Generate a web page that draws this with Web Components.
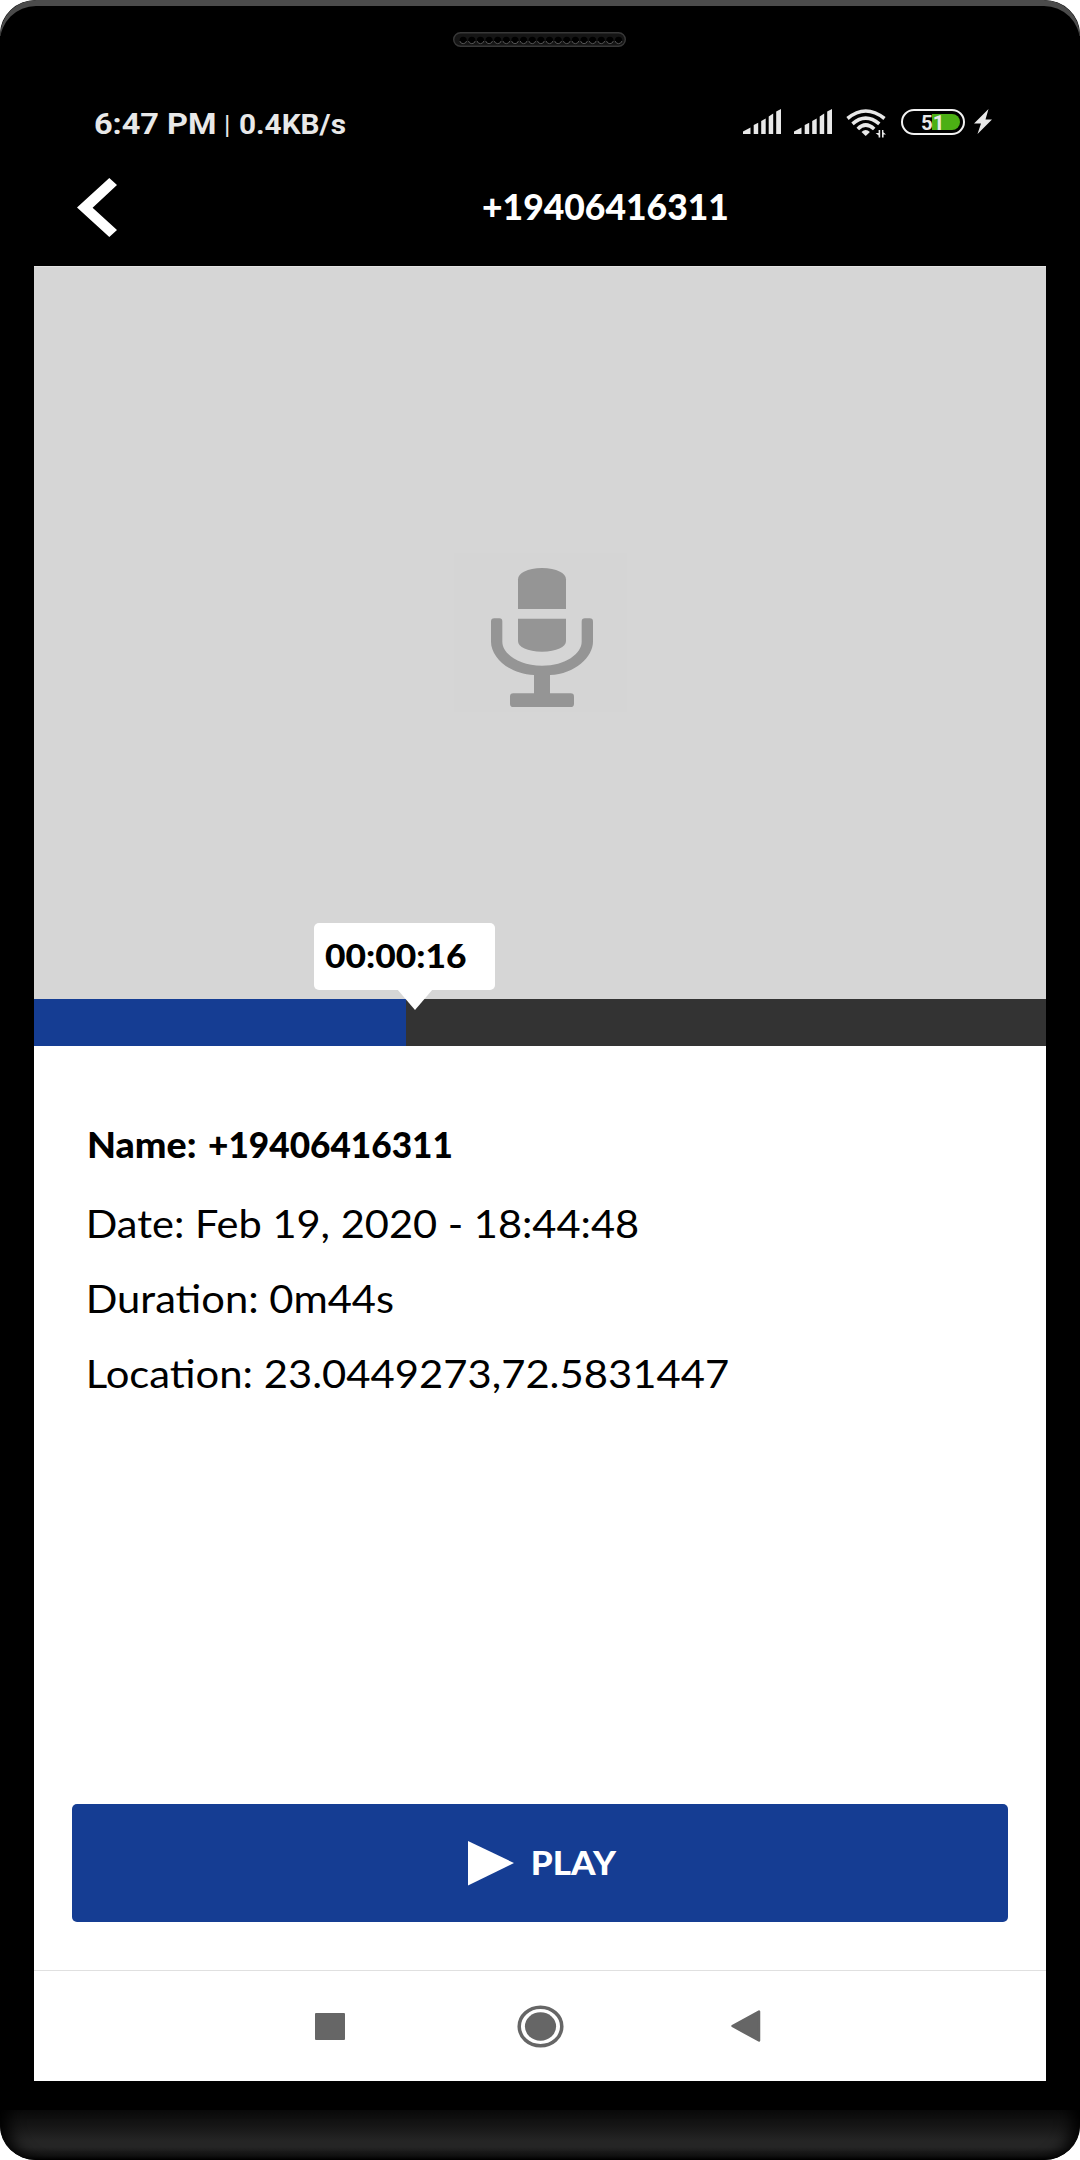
<!DOCTYPE html>
<html lang="en">
<head>
    <meta charset="UTF-8">
    <title>Recording</title>
    <style>
        body {
            margin: 0;
            background: #fff;
        }
    </style>
</head>
<body>
    <phone-frame>
        <status-bar slot="top" time="6:47 PM" speed="0.4KB/s" battery="51"></status-bar>
        <title-bar slot="top" heading="+19406416311"></title-bar>
        <record-preview></record-preview>
        <record-progress time="00:00:16"></record-progress>
        <record-details>
            <fit-text class="name" width="106">Name:</fit-text>
            <fit-text class="name" width="242" slot="name">+19406416311</fit-text>
            <fit-text width="549" slot="rows">Date: Feb 19, 2020 - 18:44:48</fit-text>
            <fit-text width="303.5" slot="rows">Duration: 0m44s</fit-text>
            <fit-text width="639" slot="rows">Location: 23.0449273,72.5831447</fit-text>
        </record-details>
        <play-button>PLAY</play-button>
        <nav-bar></nav-bar>
    </phone-frame>

    <script>
        // Text stretched so that its ink is exactly `width` pixels wide
        class FitText extends HTMLElement {
            constructor() {
                super();
                this.attachShadow({ mode: 'open' });
                this.shadowRoot.innerHTML = `
                    <style>
                        :host {
                            display: block;
                            white-space: nowrap;
                            flex: none;
                        }
                        span {
                            display: inline-block;
                            transform-origin: 0 50%;
                        }
                    </style>
                    <span><slot></slot></span>
                `;
            }

            connectedCallback() {
                const width = parseFloat(this.getAttribute('width'));
                const style = getComputedStyle(this);
                const ctx = document.createElement('canvas').getContext('2d');
                ctx.font = `${style.fontWeight} ${style.fontSize} ${style.fontFamily}`;
                const box = ctx.measureText(this.textContent);
                const scale = width / (box.actualBoundingBoxRight + box.actualBoundingBoxLeft);
                const span = this.shadowRoot.querySelector('span');
                span.style.transform = `translateX(${box.actualBoundingBoxLeft * scale}px) scaleX(${scale})`;
                this.style.width = width + 'px';
            }
        }

        class PhoneFrame extends HTMLElement {
            constructor() {
                super();
                this.attachShadow({ mode: 'open' });
                let holes = '';
                for (let i = 0; i < 19; i++) {
                    const x = 10.2 + i * 8.63;
                    holes += `<circle cx="${x}" cy="8.3" r="3.6" fill="#000"/>
                        <path d="M${x - 3.4} 9a3.5 3.5 0 0 0 6.8 0" fill="none" stroke="#555" stroke-width="1"/>`;
                }
                this.shadowRoot.innerHTML = `
                    <style>
                        :host {
                            display: flex;
                            flex-direction: column;
                            box-sizing: border-box;
                            width: 1080px;
                            height: 2160px;
                            overflow: hidden;
                            border-radius: 36px / 34px;
                            background: #000;
                            font-family: Lato, "Open Sans", sans-serif;
                        }
                        .rim {
                            height: 36px;
                            margin-bottom: -4px;
                            border-radius: 36px 36px 0 0;
                            box-shadow: inset 0 6px 0 #4b4b4b;
                            flex: none;
                        }
                        .grille {
                            display: block;
                            width: 173px;
                            height: 15px;
                            margin: 0 auto 53px 453px;
                            flex: none;
                        }
                        .screen {
                            display: flex;
                            flex-direction: column;
                            width: 1012px;
                            height: 1815px;
                            margin: 0 34px;
                            background: #fff;
                            flex: none;
                        }
                        .chin {
                            height: 50px;
                            margin-top: auto;
                            background: linear-gradient(#0b0b0b, #151515 30%, #252525 62%, #252525 74%, #121212 92%, #000);
                            box-shadow: inset 18px 0 16px -10px #000, inset -18px 0 16px -10px #000;
                            border-radius: 0 0 36px 36px;
                            flex: none;
                        }
                    </style>
                    <div class="rim"></div>
                    <svg class="grille" viewBox="0 0 173 15">
                        <rect x=".7" y=".7" width="171.6" height="13.6" rx="6.8" fill="#151515" stroke="#383838" stroke-width="1.4"/>
                        ${holes}
                    </svg>
                    <slot name="top"></slot>
                    <div class="screen"><slot></slot></div>
                    <div class="chin"></div>
                `;
            }
        }

        class StatusBar extends HTMLElement {
            connectedCallback() {
                this.attachShadow({ mode: 'open' });
                const signal = `
                    <svg width="38" height="25" viewBox="0 0 38 25" fill="#e8e8e8">
                        <path d="M0 22.5 7.5 18.5V25H0zM10.7 16l4.5-2.2V25h-4.5zM18.2 12l4.5-2.5V25h-4.5zM25.7 7.5l4.5-3V25h-4.5zM33.2 2.4 38 0V25h-4.8z"/>
                    </svg>`;
                this.shadowRoot.innerHTML = `
                    <style>
                        :host {
                            display: flex;
                            align-items: center;
                            height: 46px;
                            padding: 0 88px 0 95px;
                            color: #e8e8e8;
                            font: 700 29px/40px Roboto, sans-serif;
                            flex: none;
                        }
                        .text {
                            display: flex;
                            align-items: baseline;
                            margin-right: auto;
                            padding-top: 2px;
                        }
                        .bar {
                            margin: 0 11px 0 11px;
                            font-weight: 400;
                            font-size: 26px;
                        }
                        .speed {
                            font-size: 27px;
                        }
                        .icons {
                            display: flex;
                            align-items: center;
                            padding-bottom: 3px;
                        }
                        .icons svg {
                            display: block;
                        }
                        .battery {
                            display: flex;
                            align-items: center;
                            justify-content: center;
                            box-sizing: border-box;
                            width: 64px;
                            height: 26px;
                            margin: 0 9px 0 15px;
                            border: 2.5px solid #f2f2f2;
                            border-radius: 13px;
                        }
                        .level {
                            display: flex;
                            align-items: center;
                            width: 54px;
                            height: 16px;
                            border-radius: 8px;
                            background: linear-gradient(90deg, transparent 26px, #4caf14 0);
                            font-size: 21px;
                            line-height: 18px;
                        }
                        .level fit-text {
                            margin: 2px 0 0 16px;
                        }
                    </style>
                    <div class="text">
                        <fit-text width="120">${this.getAttribute('time')}</fit-text>
                        <fit-text class="bar" width="3">|</fit-text>
                        <fit-text class="speed" width="105">${this.getAttribute('speed')}</fit-text>
                    </div>
                    <div class="icons">
                        ${signal}
                        <svg width="13" height="1"></svg>
                        ${signal}
                        <svg width="14" height="1"></svg>
                        <svg width="40" height="29" viewBox="0 0 40 29" style="margin-top: 4px">
                            <g fill="none" stroke="#e8e8e8" stroke-width="3.6">
                                <path d="M1.5 9.5Q19.5-5.5 38.5 9.5"/>
                                <path d="M6.5 14.8Q19.5 3.3 33.3 14.8"/>
                                <path d="M11.8 20Q19.5 12 28.2 20"/>
                            </g>
                            <path d="M19.7 27 15.5 23q4.2-4 8.4 0z" fill="#e8e8e8"/>
                            <path d="M34.2 21v7.5h-1.6v-2l-3-2.5h3v-3zM36 28.5V21h1.4v2.2l2.6 2.3h-2.4v3z" fill="#e8e8e8"/>
                        </svg>
                        <div class="battery"><div class="level"><fit-text width="19.5">${this.getAttribute('battery')}</fit-text></div></div>
                        <svg width="18" height="25" viewBox="0 0 18 25"><path d="M14.5 0 0 14.5h7L3.5 25 18 10.5h-6.500z" fill="#e8e8e8"/></svg>
                    </div>
                `;
            }
        }

        class TitleBar extends HTMLElement {
            connectedCallback() {
                this.attachShadow({ mode: 'open' });
                this.shadowRoot.innerHTML = `
                    <style>
                        :host {
                            display: flex;
                            align-items: center;
                            gap: 366px;
                            height: 120px;
                            padding-left: 77px;
                            color: #fff;
                            font-size: 36px;
                            font-weight: 900;
                            line-height: 48px;
                            flex: none;
                        }
                        svg {
                            margin-top: 2px;
                        }
                    </style>
                    <svg width="40" height="59" viewBox="0 0 40 59"><path d="M0 29.500 32.300 0 40 7 15.600 29.800 40 52 32.300 59z" fill="#fff"/></svg>
                    <fit-text width="244">${this.getAttribute('heading')}</fit-text>
                `;
            }
        }

        class RecordPreview extends HTMLElement {
            constructor() {
                super();
                this.attachShadow({ mode: 'open' });
                this.shadowRoot.innerHTML = `
                    <style>
                        :host {
                            display: flex;
                            align-items: center;
                            justify-content: center;
                            height: 733px;
                            background: #d6d6d6;
                            box-shadow: inset 0 1px 0 #e3e3e3;
                            flex: none;
                        }
                        svg {
                            background: #d5d5d5;
                        }
                    </style>
                    <svg width="173" height="159" viewBox="42 39 519 477" fill="#959595">
                        <path d="M234 207V118C234 100 262 84 306 84S378 100 378 118V207Z"/>
                        <path d="M234 236H378V303C378 321 350 335 306 335S234 321 234 303Z"/>
                        <path d="M153 245q0-10 10-10h15q9 0 9 10V305C187 340 235 377 306 377S425 340 425 305V245q0-10 10-10h14q10 0 10 10V305C459 350 405 402 330 405V460H392q10 0 10 10V491q0 10-10 10H220q-10 0-10-10V470q0-10 10-10H282V405C205 402 153 350 153 305Z"/>
                    </svg>
                `;
            }
        }

        class RecordProgress extends HTMLElement {
            connectedCallback() {
                this.attachShadow({ mode: 'open' });
                this.shadowRoot.innerHTML = `
                    <style>
                        :host {
                            display: block;
                            position: relative;
                            height: 47px;
                            background: #333;
                            flex: none;
                        }
                        .done {
                            width: 372px;
                            height: 100%;
                            background: #153d93;
                        }
                        .tip {
                            position: absolute;
                            left: 280px;
                            bottom: 56px;
                            box-sizing: border-box;
                            width: 181px;
                            height: 67px;
                            padding: 0 11px;
                            border-radius: 5px;
                            background: #fff;
                            color: #000;
                            font-size: 32px;
                            font-weight: 900;
                            line-height: 65px;
                        }
                        .tip::after {
                            content: '';
                            position: absolute;
                            left: 83px;
                            top: 66px;
                            border: 18px solid transparent;
                            border-top: 21px solid #fff;
                            border-bottom: 0;
                        }
                    </style>
                    <div class="done"></div>
                    <div class="tip"><fit-text width="141">${this.getAttribute('time')}</fit-text></div>
                `;
            }
        }

        class RecordDetails extends HTMLElement {
            constructor() {
                super();
                this.attachShadow({ mode: 'open' });
                this.shadowRoot.innerHTML = `
                    <style>
                        :host {
                            display: flex;
                            flex-direction: column;
                            padding: 61px 54px 0 55px;
                            color: #000;
                            font-size: 38px;
                            line-height: 75px;
                        }
                        .name {
                            display: flex;
                            gap: 14px;
                            margin-bottom: 4px;
                        }
                        ::slotted(.name) {
                            font-size: 36px;
                            font-weight: 900;
                        }
                    </style>
                    <div class="name"><slot></slot><slot name="name"></slot></div>
                    <slot name="rows"></slot>
                `;
            }
        }

        class PlayButton extends HTMLElement {
            connectedCallback() {
                this.attachShadow({ mode: 'open' });
                this.shadowRoot.innerHTML = `
                    <style>
                        :host {
                            display: flex;
                            margin: auto 38px 47px;
                            flex: none;
                        }
                        button {
                            display: flex;
                            align-items: center;
                            gap: 16px;
                            width: 936px;
                            height: 118px;
                            padding: 0 0 0 396px;
                            border: 0;
                            border-radius: 5px;
                            background: #153d93;
                            color: #fff;
                            font: 900 32px/40px Lato, "Open Sans", sans-serif;
                        }
                        fit-text {
                            margin-bottom: 1px;
                        }
                    </style>
                    <button>
                        <svg width="46" height="45" viewBox="0 0 46 45"><path d="M0 0 46 22 0 44.500z" fill="#fff"/></svg>
                        <fit-text width="84">${this.textContent}</fit-text>
                    </button>
                `;
            }
        }

        class NavBar extends HTMLElement {
            constructor() {
                super();
                this.attachShadow({ mode: 'open' });
                this.shadowRoot.innerHTML = `
                    <style>
                        :host {
                            display: flex;
                            align-items: center;
                            box-sizing: border-box;
                            height: 111px;
                            margin-top: 1px;
                            padding-left: 281px;
                            border-top: 1px solid #e0e0e0;
                            flex: none;
                        }
                        svg {
                            fill: #666;
                            flex: none;
                        }
                        .home {
                            margin: 0 167px 0 172px;
                        }
                    </style>
                    <svg width="30" height="27"><rect width="30" height="27" rx="1"/></svg>
                    <svg class="home" width="47" height="43" viewBox="0 0 47 43">
                        <ellipse cx="23.500" cy="21.500" rx="21.300" ry="19.300" fill="none" stroke="#666" stroke-width="3.500"/>
                        <ellipse cx="23.500" cy="21.500" rx="15.600" ry="14.200"/>
                    </svg>
                    <svg width="30" height="32" viewBox="0 0 30 32"><path d="M1.500 16 28 1.500V30.500z" stroke="#666" stroke-width="2.500" stroke-linejoin="round"/></svg>
                `;
            }
        }

        // Containers first, so that the text inherits its final font when measured
        customElements.define('phone-frame', PhoneFrame);
        customElements.define('status-bar', StatusBar);
        customElements.define('title-bar', TitleBar);
        customElements.define('record-preview', RecordPreview);
        customElements.define('record-progress', RecordProgress);
        customElements.define('record-details', RecordDetails);
        customElements.define('play-button', PlayButton);
        customElements.define('nav-bar', NavBar);
        customElements.define('fit-text', FitText);
    </script>
</body>
</html>
